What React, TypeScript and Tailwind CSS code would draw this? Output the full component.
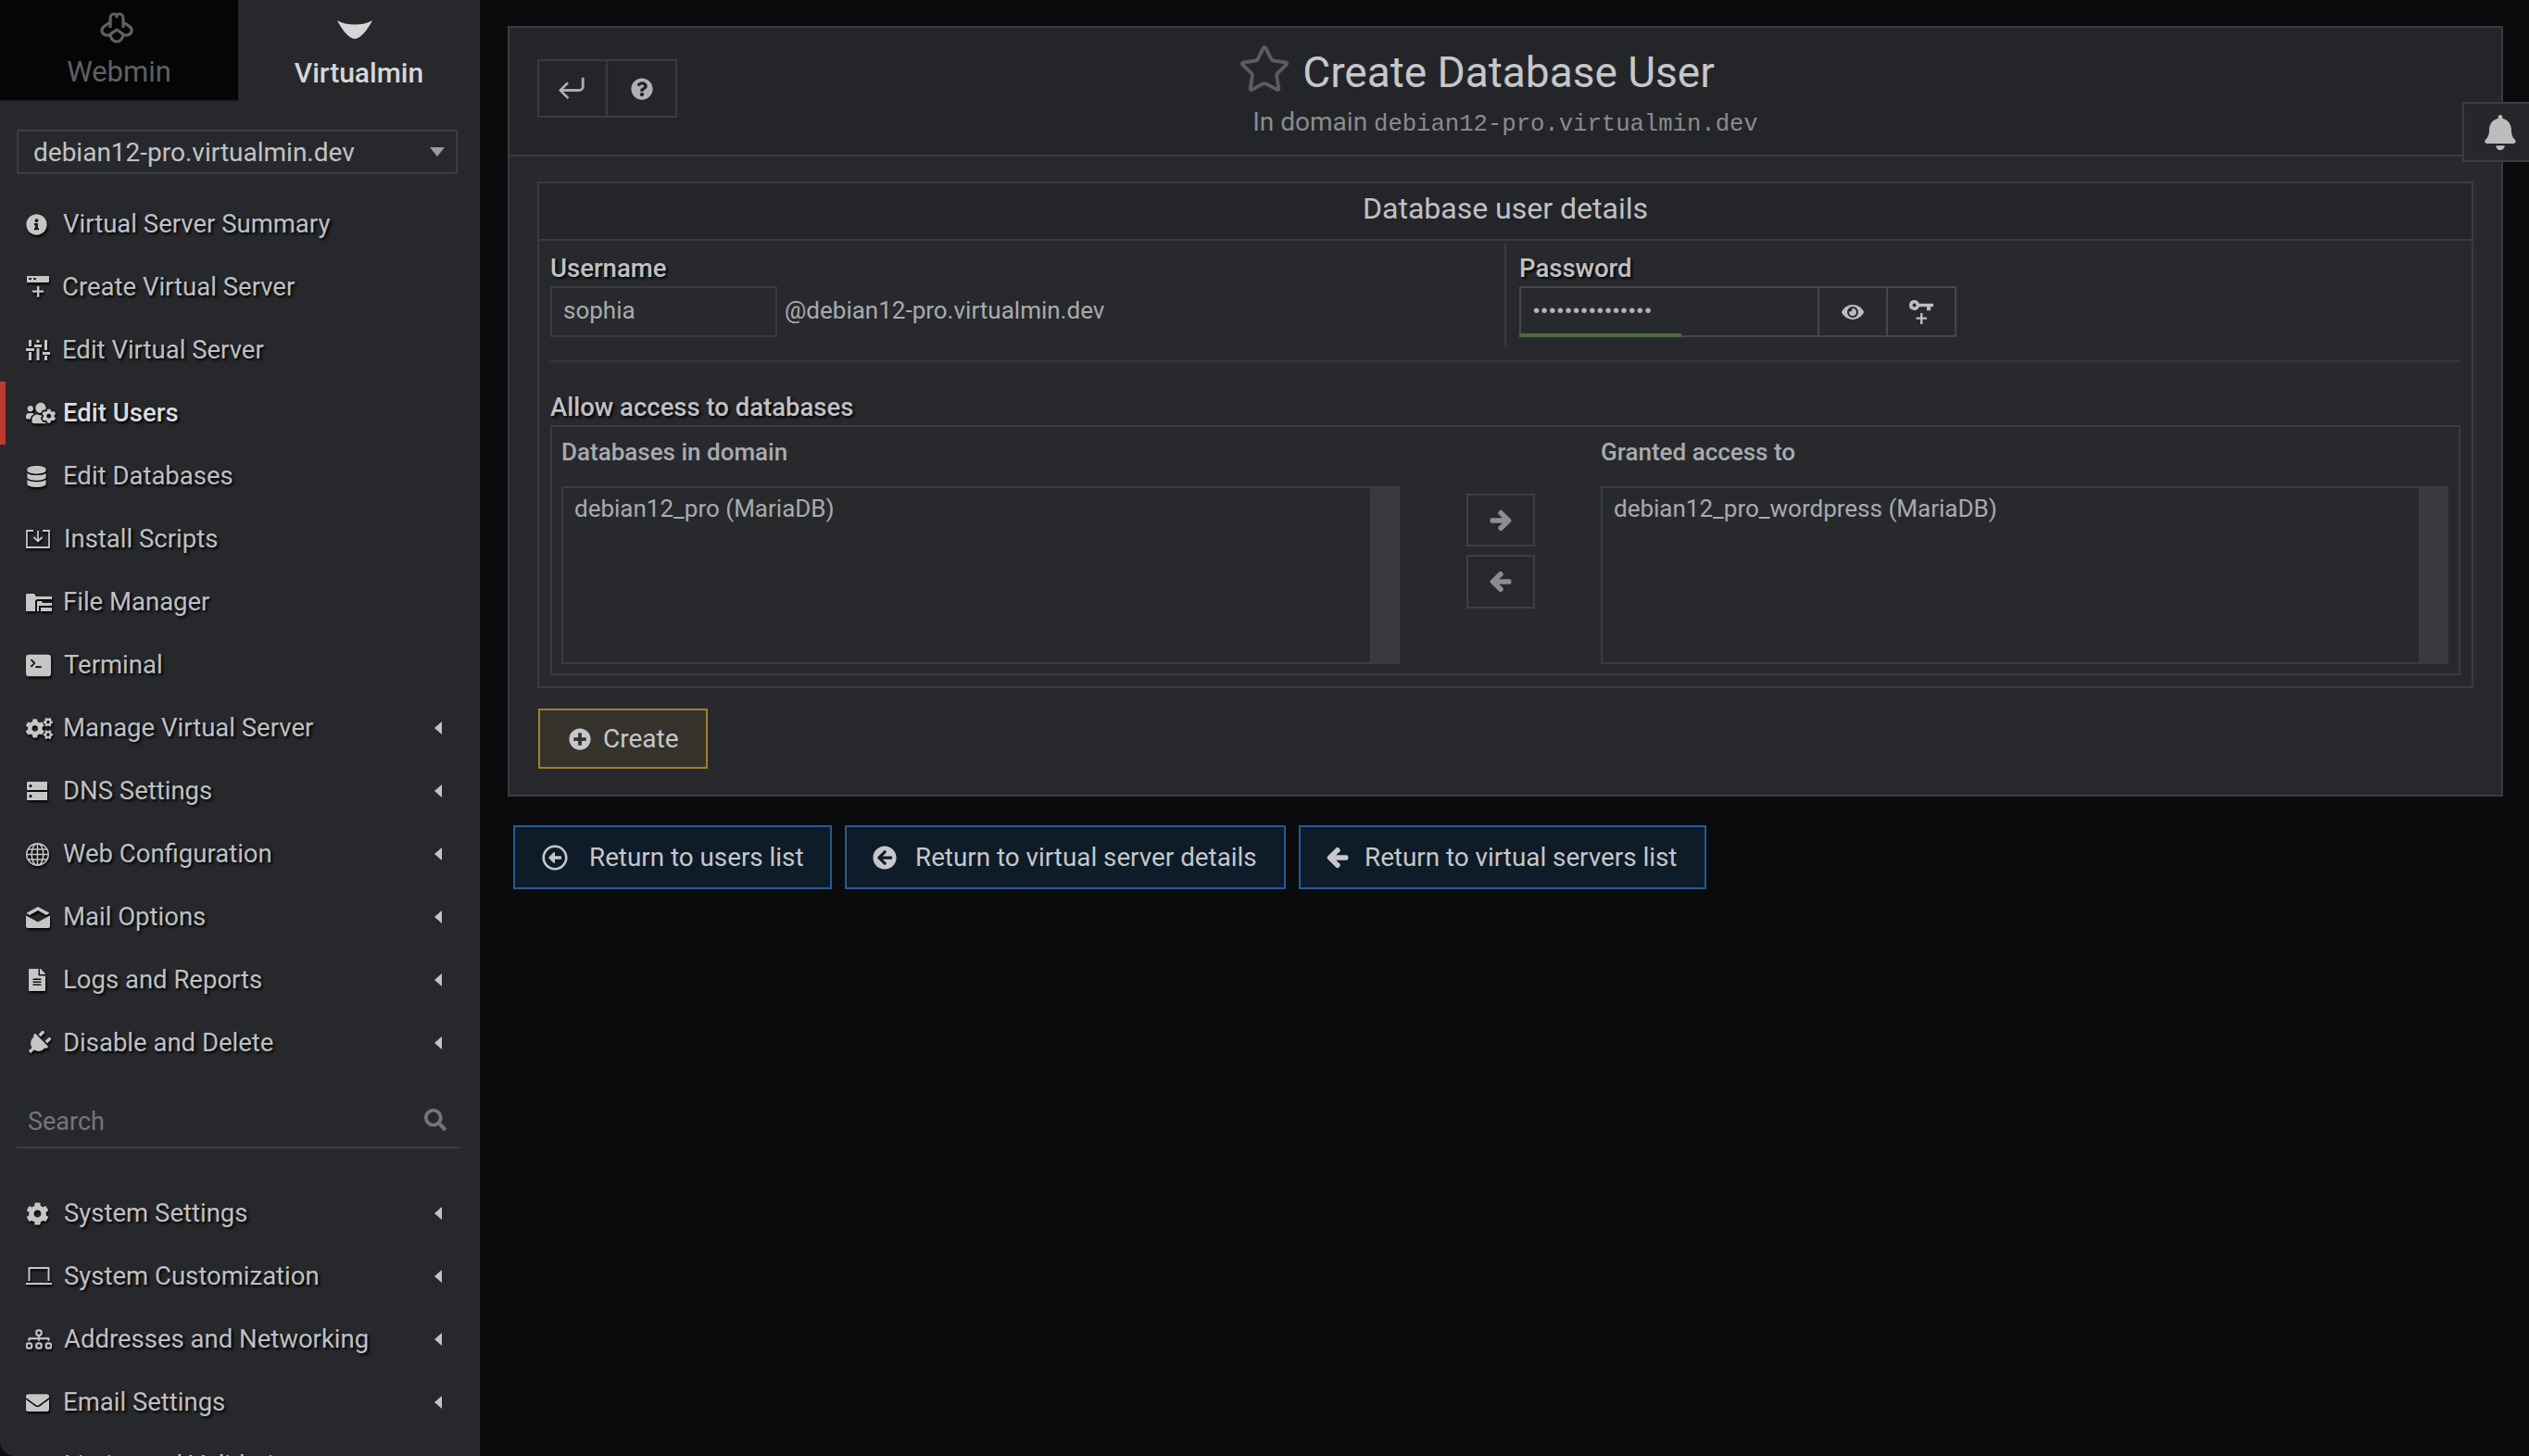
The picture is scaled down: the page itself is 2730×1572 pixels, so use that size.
import type { ReactNode } from "react";
import {
  FaArrowCircleLeft,
  FaArrowLeft,
  FaArrowRight,
  FaBell,
  FaCog,
  FaCogs,
  FaDatabase,
  FaEnvelope,
  FaEye,
  FaFileAlt,
  FaInfoCircle,
  FaPlug,
  FaPlusCircle,
  FaQuestionCircle,
  FaRegArrowAltCircleLeft,
  FaSearch,
  FaUserCheck,
  FaUsersCog,
} from "react-icons/fa";
import { BsArrowReturnLeft, BsDiagram3, BsGlobe, BsTerminalFill } from "react-icons/bs";
import { Star } from "lucide-react";

const ROBOTO = "font-['Roboto',sans-serif]";
const SHADOW = "[text-shadow:2px_2px_3px_#000]";

function NewServerIcon() {
  return (
    <svg viewBox="0 0 26 26" className="h-[26px] w-[26px]" fill="currentColor">
      <path d="M1 1h24a1 1 0 0 1 0 0v6a1 1 0 0 1-1 1H1z" />
      <rect x="3" y="3" width="3" height="2" fill="#27282c" />
      <rect x="8" y="3" width="3" height="2" fill="#27282c" />
      <path d="M12 12h2.400v4.400H19v2.400h-4.600v5H12v-5H7v-2.400h5z" />
    </svg>
  );
}

function SlidersIcon() {
  return (
    <svg viewBox="0 0 26 22" className="h-[22px] w-[26px]" fill="currentColor">
      <rect x="3" y="0" width="3" height="7" />
      <rect x="3" y="13" width="3" height="9" />
      <rect x="0" y="9" width="9" height="3" />
      <rect x="11.500" y="0" width="3" height="3" />
      <rect x="11.500" y="9" width="3" height="13" />
      <rect x="9" y="5" width="8" height="3" />
      <rect x="20" y="0" width="3" height="11" />
      <rect x="20" y="17" width="3" height="5" />
      <rect x="18" y="13" width="8" height="3" />
    </svg>
  );
}

function InstallIcon() {
  return (
    <svg viewBox="0 0 26 20" className="h-[20px] w-[26px]" fill="none" stroke="currentColor" strokeWidth="1.800">
      <path d="M8 1H1v18h24V1h-7" />
      <path d="M13 1v11M8.500 8l4.500 4.500L17.500 8" />
    </svg>
  );
}

function FoldersIcon() {
  return (
    <svg viewBox="0 0 28 20" className="h-[20px] w-[28px]" fill="currentColor">
      <path d="M0 2a1 1 0 0 1 1-1h8l2 3h17v3H13a3 3 0 0 0-3 3v10H0z" />
      <path d="M12 9h5l1 2h10v3H14v6h-2zM16 16h12v4H16z" />
    </svg>
  );
}

function StackIcon() {
  return (
    <svg viewBox="0 0 24 20" className="h-[20px] w-[24px]" fill="currentColor">
      <path fillRule="evenodd" d="M1 0h22v9H1zM5 3a1.600 1.600 0 1 0 0 3.200A1.600 1.600 0 0 0 5 3z" />
      <path fillRule="evenodd" d="M1 11h22v9H1zM5 14a1.600 1.600 0 1 0 0 3.200A1.600 1.600 0 0 0 5 14z" />
    </svg>
  );
}

function LaptopIcon() {
  return (
    <svg viewBox="0 0 28 20" className="h-[20px] w-[28px]" fill="none" stroke="currentColor" strokeWidth="2">
      <path d="M3.500 15V1h21v14" />
      <path d="M0 18h28" />
    </svg>
  );
}

function OpenMailIcon() {
  return (
    <svg viewBox="0 0 26 23" className="h-[23px] w-[26px]" fill="currentColor">
      <path d="M13 0l12 6.500v.8l-3 1.700-9-5-9 5-3-1.700v-.8z" />
      <path d="M0 9.500l13 7 13-7V21a2 2 0 0 1-2 2H2a2 2 0 0 1-2-2z" />
    </svg>
  );
}

function KeyPlusIcon() {
  return (
    <svg viewBox="0 0 26 26" className="h-[26px] w-[26px]" fill="currentColor">
      <path fillRule="evenodd" d="M5.500 0a5.500 5.500 0 0 1 5.200 3.700H26v3.600h-3v4h-4v-4h-8.300A5.500 5.500 0 1 1 5.500 0zm0 3.500a2 2 0 1 0 0 4 2 2 0 0 0 0-4z" />
      <path d="M12 14h2.400v4.500H19v2.300h-4.600V26H12v-5.200H7.500v-2.300H12z" />
    </svg>
  );
}

type NavItem = { label: string; icon: ReactNode; cell: string; caret?: boolean; active?: boolean };

const PRIMARY: NavItem[] = [
  { label: "Virtual Server Summary", icon: <FaInfoCircle size={23} />, cell: "w-[40px]" },
  { label: "Create Virtual Server", icon: <NewServerIcon />, cell: "w-[39px]" },
  { label: "Edit Virtual Server", icon: <SlidersIcon />, cell: "w-[39px]" },
  { label: "Edit Users", icon: <FaUsersCog size={32} />, cell: "w-[40px]", active: true },
  { label: "Edit Databases", icon: <FaDatabase size={23} />, cell: "w-[40px]" },
  { label: "Install Scripts", icon: <InstallIcon />, cell: "w-[41px]" },
  { label: "File Manager", icon: <FoldersIcon />, cell: "w-[40px]" },
  { label: "Terminal", icon: <BsTerminalFill size={27} />, cell: "w-[41px]" },
  { label: "Manage Virtual Server", icon: <FaCogs size={29} />, cell: "w-[40px]", caret: true },
  { label: "DNS Settings", icon: <StackIcon />, cell: "w-[40px]", caret: true },
  { label: "Web Configuration", icon: <BsGlobe size={25} />, cell: "w-[40px]", caret: true },
  { label: "Mail Options", icon: <OpenMailIcon />, cell: "w-[40px]", caret: true },
  { label: "Logs and Reports", icon: <FaFileAlt size={24} />, cell: "w-[40px]", caret: true },
  { label: "Disable and Delete", icon: <FaPlug size={27} className="rotate-45" />, cell: "w-[40px]", caret: true },
];

const SECONDARY: NavItem[] = [
  { label: "System Settings", icon: <FaCog size={25} />, cell: "w-[41px]", caret: true },
  { label: "System Customization", icon: <LaptopIcon />, cell: "w-[41px]", caret: true },
  { label: "Addresses and Networking", icon: <BsDiagram3 size={28} stroke="currentColor" strokeWidth={0.300} />, cell: "w-[41px]", caret: true },
  { label: "Email Settings", icon: <FaEnvelope size={25} />, cell: "w-[40px]", caret: true },
  { label: "Limits and Validation", icon: <FaUserCheck size={25} />, cell: "w-[41px]", caret: true },
];

function NavRow({ item }: { item: NavItem }) {
  return (
    <div className="relative flex h-[68px] shrink-0 items-center pl-[28px] pr-[41px]">
      {item.active && <span className="absolute left-0 top-0 h-full w-[6px] bg-[#c0392f]" />}
      <span className={`flex shrink-0 items-center text-[#c6c6c7] [filter:drop-shadow(1px_2px_1px_#000)] ${item.cell}`}>
        {item.icon}
      </span>
      <span className={`flex-1 text-[27.500px] leading-[34px] ${SHADOW} ${item.active ? "font-medium text-[#dcdcdd]" : "text-[#bfc0c2]"}`}>
        {item.label}
      </span>
      {item.caret && <span className="h-0 w-0 border-y-[7px] border-r-[8px] border-y-transparent border-r-[#c4c4c5]" />}
    </div>
  );
}

function Sidebar() {
  return (
    <aside className="flex h-[1572px] w-[518px] shrink-0 flex-col overflow-hidden rounded-bl-[16px] bg-[#27282c]">
      <div className="flex h-[110px] shrink-0">
        <div className="flex w-[257px] flex-col items-center border-b-[2px] border-[#1f2023] bg-[#050505] pt-[13px] text-[#5f6061]">
          <svg viewBox="0 0 36 34" className="mr-[6px] h-[34px] w-[36px]" fill="none" stroke="currentColor" strokeWidth="3.200" strokeLinejoin="round">
            <path d="M11 17V7c0-3 2-5 4-5s3 1 3 3c0-2 1-3 3-3s4 2 4 5v10" />
            <path d="M11 11l-6 4c-3 2-4 5-2 8 2 2 5 3 8 1l7-5 7 5c3 2 6 1 8-1 2-3 1-6-2-8l-6-4" />
            <path d="M11 24c0 4 3 8 7 8s7-4 7-8" />
          </svg>
          <span className="mt-[13px] text-[31px] leading-[36px]">Webmin</span>
        </div>
        <div className="flex flex-1 flex-col items-center pt-[22px] text-[#d6d6d7]">
          <svg viewBox="0 0 38 20" className="mr-[9px] h-[20px] w-[38px]" fill="currentColor">
            <path d="M0 0c10 6 28 6 38 0C33 10 25 20 19 20S5 10 0 0z" />
          </svg>
          <span className="mt-[19px] text-[30px] font-medium leading-[36px]">Virtualmin</span>
        </div>
      </div>

      <div className="ml-[18px] mr-[24px] mt-[30px] flex h-[48px] shrink-0 items-center justify-between border-2 border-[#3c3d41] pl-[16px] pr-[12px]">
        <span className="pt-[1px] text-[28px] leading-[34px] text-[#c2c3c5]">debian12-pro.virtualmin.dev</span>
        <span className="h-0 w-0 border-x-[8px] border-t-[10px] border-x-transparent border-t-[#9a9b9d]" />
      </div>

      <nav className="mt-[20px] flex shrink-0 flex-col">
        {PRIMARY.map((item) => (
          <NavRow key={item.label} item={item} />
        ))}
      </nav>

      <div className="ml-[18px] mr-[22px] flex h-[80px] shrink-0 items-end justify-between border-b-2 border-[#3c3d41] pb-[9px] pl-[12px] pr-[14px] text-[#75767a]">
        <span className="text-[27px] leading-[36px]">Search</span>
        <FaSearch size={24} className="mb-[8px]" />
      </div>

      <nav className="mt-[36px] flex shrink-0 flex-col">
        {SECONDARY.map((item) => (
          <NavRow key={item.label} item={item} />
        ))}
      </nav>
    </aside>
  );
}

function ListBox({ text, width, label }: { text: string; width: string; label: string }) {
  return (
    <div className={`flex shrink-0 flex-col ${width}`}>
      <div className="flex h-[64px] items-start pt-[11px] text-[26px] font-medium leading-[32px] text-[#a9abae]">{label}</div>
      <div className="flex h-[192px] border-2 border-[#3a3b3f]">
        <div className="flex-1 px-[12px] pt-[4px] text-[26px] leading-[36px] text-[#a9abae]">{text}</div>
        <div className="w-[30px] border-l-2 border-[#3a3b3f] bg-[#38393d]" />
      </div>
    </div>
  );
}

function ReturnButton({ icon, label, width }: { icon: ReactNode; label: string; width: string }) {
  return (
    <button className={`flex h-[69px] items-center border-2 border-[#235a96] bg-[#0e1b28] text-[27.800px] text-[#c6c7c9] ${width}`}>
      {icon}
      {label}
    </button>
  );
}

function Panel() {
  return (
    <section className="w-[2154px] border-2 border-[#3a3b3f] bg-[#28292d]">
      <header className="grid h-[139px] grid-cols-[1fr_auto_1fr] border-b-2 border-[#3a3b3f] bg-[#242529] px-[30px]">
        <div className="mt-[34px] flex h-[63px] w-[151px] self-start justify-self-start border-2 border-[#3a3b3f]">
          <span className="flex w-[74px] items-center justify-center border-r-2 border-[#3a3b3f] text-[#aeb0b2]">
            <BsArrowReturnLeft size={30} stroke="currentColor" strokeWidth={0.500} className="mr-[2px]" />
          </span>
          <span className="flex flex-1 items-center justify-center text-[#aeb0b2]">
            <FaQuestionCircle size={24} />
          </span>
        </div>
        <div className="flex flex-col items-center pt-[26px]">
          <h1 className="relative ml-[7px] text-[46px] font-normal leading-[44px] text-[#c6c7c9]">
            <Star size={58} strokeWidth={1.600} className="absolute left-[-70px] top-[-10px] text-[#5b5c60]" />
            Create Database User
          </h1>
          <p className="mt-[16px] text-[28px] leading-[32px] text-[#8a8c90]">
            In domain <span className="font-['Liberation_Mono',monospace] text-[25.600px]">debian12-pro.virtualmin.dev</span>
          </p>
        </div>
        <div />
      </header>

      <div className="px-[30px] pt-[27px]">
        <div className="border-2 border-[#3a3b3f]">
          <div className="flex h-[62px] items-center justify-center border-b-2 border-[#3a3b3f] bg-[#242529] pb-[6px] text-[32px] text-[#c0c1c3]">
            Database user details
          </div>
          <div className="flex h-[115px] pt-[3px]">
            <div className="w-[1042px] pl-[12px]">
              <div className={`h-[46px] pt-[7px] text-[27.500px] font-medium leading-[40px] text-[#c0c1c3] ${SHADOW}`}>Username</div>
              <div className="flex items-center">
                <div className="flex h-[55px] w-[245px] items-center border-2 border-[#3a3b3f] pb-[2px] pl-[12px] text-[26px] text-[#a9abae]">sophia</div>
                <span className="ml-[8px] pb-[2px] text-[26px] text-[#a9abae]">@debian12-pro.virtualmin.dev</span>
              </div>
            </div>
            <div className="h-[111px] border-l-2 border-[#3a3b3f] pl-[14px]">
              <div className={`h-[46px] pt-[7px] text-[27.500px] font-medium leading-[40px] text-[#c0c1c3] ${SHADOW}`}>Password</div>
              <div className="flex h-[55px] w-[472px] border-2 border-[#47484c]">
                <div className="relative flex w-[322px] border-r-2 border-[#47484c] pl-[13px] pt-[9px] font-['Liberation_Sans',sans-serif] text-[20px] leading-[30px] tracking-[1.600px] text-[#b5b6b8]">
                  •••••••••••••••
                  <span className="absolute bottom-[-2px] left-[-2px] h-[4px] w-[175px] bg-[#4e6b3e]" />
                </div>
                <span className="flex w-[74px] items-center justify-center border-r-2 border-[#47484c] text-[#bcbdbf]">
                  <FaEye size={24} />
                </span>
                <span className="flex flex-1 items-center justify-center text-[#bcbdbf]">
                  <KeyPlusIcon />
                </span>
              </div>
            </div>
          </div>

          <div className="mx-[12px] mt-[14px] border-t-2 border-[#36383c]" />

          <div className="pl-[12px] pr-[12px]">
            <div className={`h-[68px] pt-[33px] text-[27.500px] font-medium leading-[32px] text-[#c0c1c3] ${SHADOW}`}>Allow access to databases</div>
            <div className="flex h-[270px] border-2 border-[#3a3b3f] pl-[10px]">
              <ListBox label="Databases in domain" text="debian12_pro (MariaDB)" width="w-[905px]" />
              <div className="flex w-[217px] shrink-0 flex-col items-center pt-[72px] text-[#8c8d8f]">
                <span className="flex h-[57px] w-[74px] items-center justify-center border-2 border-[#3e3f43]">
                  <FaArrowRight size={24} stroke="currentColor" strokeWidth={40} />
                </span>
                <span className="mt-[9px] flex h-[58px] w-[74px] items-center justify-center border-2 border-[#3e3f43]">
                  <FaArrowLeft size={24} stroke="currentColor" strokeWidth={40} />
                </span>
              </div>
              <ListBox label="Granted access to" text="debian12_pro_wordpress (MariaDB)" width="w-[915px]" />
            </div>
          </div>
          <div className="h-[12px]" />
        </div>

        <button className="ml-[1px] mt-[22px] flex h-[65px] w-[183px] items-center border-2 border-[#a67c2c] bg-[#35322c] pl-[31px] text-[28px] text-[#c6c7c9]">
          <FaPlusCircle size={24} className="mr-[13px]" />
          Create
        </button>
        <div className="h-[28px]" />
      </div>
    </section>
  );
}

export default function App() {
  return (
    <div className={`relative flex h-[1572px] overflow-hidden bg-[#0a0b0c] ${ROBOTO}`}>
      <Sidebar />
      <main className="pl-[30px] pt-[28px]">
        <Panel />
        <div className="ml-[6px] mt-[31px] flex gap-[14px]">
          <ReturnButton
            width="w-[344px]"
            label="Return to users list"
            icon={<FaRegArrowAltCircleLeft size={28} className="ml-[29px] mr-[23px]" />}
          />
          <ReturnButton
            width="w-[476px]"
            label="Return to virtual server details"
            icon={<FaArrowCircleLeft size={26} className="ml-[28px] mr-[20px]" />}
          />
          <ReturnButton
            width="w-[440px]"
            label="Return to virtual servers list"
            icon={<FaArrowLeft size={24} stroke="currentColor" strokeWidth={40} className="ml-[28px] mr-[17px]" />}
          />
        </div>
      </main>
      <div className="absolute right-0 top-[110px] flex h-[65px] w-[72px] items-center justify-center border-2 border-r-0 border-[#3c3d41] bg-[#27282c]/90 pl-[8px] text-[#bdbdbd]">
        <FaBell size={38} />
      </div>
    </div>
  );
}
